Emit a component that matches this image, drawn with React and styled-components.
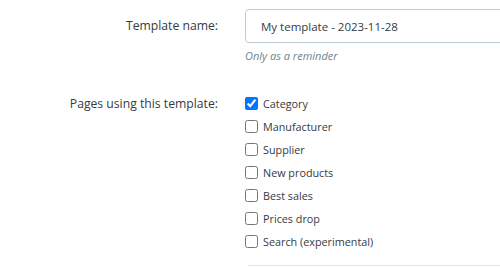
import styled, { createGlobalStyle } from "styled-components";

const GlobalStyle = createGlobalStyle`
  html, body {
    margin: 0;
    padding: 0;
    background: #fff;
  }
  body {
    font-family: "Open Sans", "Liberation Sans", sans-serif;
    color: #363a41;
  }
`;

const Form = styled.div`
  width: 100%;
  overflow: hidden;
  padding-top: 9px;
`;

const Row = styled.div`
  display: grid;
  grid-template-columns: 218px minmax(0, 1fr);
  column-gap: 27px;
  margin-bottom: ${({ $gap }) => $gap || 0}px;
`;

const Label = styled.label`
  text-align: right;
  font-size: 12.2px;
  line-height: ${({ $lh }) => $lh || 33}px;
`;

const Control = styled.div`
  min-width: 0;
`;

const Input = styled.input`
  box-sizing: border-box;
  width: 420px;
  height: 34px;
  padding: 0 15px;
  border: 1px solid #bbcdd2;
  border-radius: 4px;
  font-family: inherit;
  font-size: 11.5px;
  color: #363a41;
  outline: none;
`;

const Help = styled.div`
  margin-top: 5px;
  font-size: 11px;
  font-style: italic;
  color: #6c868e;
`;

const CheckList = styled.div`
  display: flex;
  flex-direction: column;
`;

const CheckRow = styled.label`
  display: flex;
  align-items: center;
  gap: 5px;
  height: 23px;
  font-size: 10.8px;
  color: #363a41;
`;

const Box = styled.input`
  margin: 0;
  width: 13px;
  height: 13px;
`;

const Divider = styled.div`
  margin-top: 12px;
  margin-left: 3px;
  border-top: 1px solid #dbe6e9;
`;

const pages = [
  { name: "Category", checked: true },
  { name: "Manufacturer" },
  { name: "Supplier" },
  { name: "New products" },
  { name: "Best sales" },
  { name: "Prices drop" },
  { name: "Search (experimental)" },
];

export default function App() {
  return (
    <>
      <GlobalStyle />
      <Form>
        <Row $gap={29}>
          <Label>Template name:</Label>
          <Control>
            <Input defaultValue="My template - 2023-11-28" />
            <Help>Only as a reminder</Help>
          </Control>
        </Row>
        <Row>
          <Label $lh={23}>Pages using this template:</Label>
          <Control>
            <CheckList>
              {pages.map((p) => (
                <CheckRow key={p.name}>
                  <Box type="checkbox" defaultChecked={p.checked} />
                  {p.name}
                </CheckRow>
              ))}
            </CheckList>
            <Divider />
          </Control>
        </Row>
      </Form>
    </>
  );
}
